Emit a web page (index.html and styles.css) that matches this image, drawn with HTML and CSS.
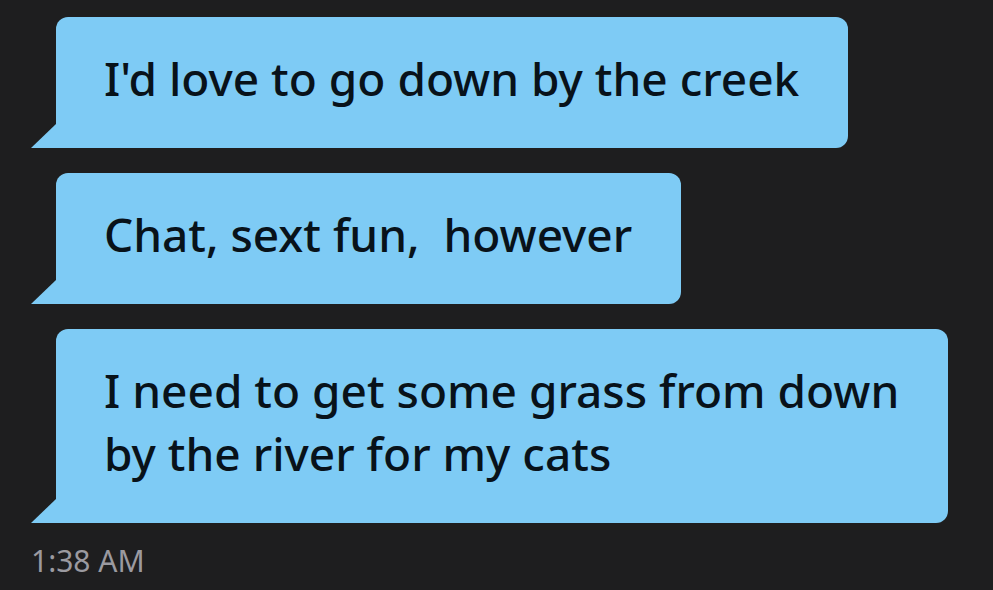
FILE: index.html
```html
<!DOCTYPE html>
<html>
<head>
<meta charset="utf-8">
<link rel="stylesheet" href="styles.css">
</head>
<body>
<div class="thread">
  <div class="bubble">I'd love to go down by the creek</div>
  <div class="bubble">Chat, sext fun,&nbsp; however</div>
  <div class="bubble">I need to get some grass from down<br>by the river for my cats</div>
  <div class="time">1:38 AM</div>
</div>
</body>
</html>
```
FILE: styles.css
```css
html, body {
  margin: 0;
  padding: 0;
  background: #1e1e1f;
  height: 100%;
  overflow: hidden;
}
.thread {
  display: flex;
  flex-direction: column;
  align-items: flex-start;
  gap: 25px;
  padding: 17px 0 0 31px;
  font-family: "Noto Sans", sans-serif;
}
.bubble {
  position: relative;
  margin-left: 25px;
  max-width: 840px;
  padding: 30px 49px 38px 48px;
  background: #7ecbf5;
  color: #08121a;
  font-size: 46px;
  font-weight: 500;
  line-height: 63px;
  border-radius: 12px 12px 12px 0;
}
.bubble::before {
  content: "";
  position: absolute;
  left: -25px;
  bottom: 0;
  width: 25px;
  height: 24px;
  background: #7ecbf5;
  clip-path: polygon(100% 0, 100% 100%, 0 100%);
}
.time {
  margin-top: -5px;
  color: #9b9aa0;
  font-size: 30px;
  line-height: 36px;
}
```
